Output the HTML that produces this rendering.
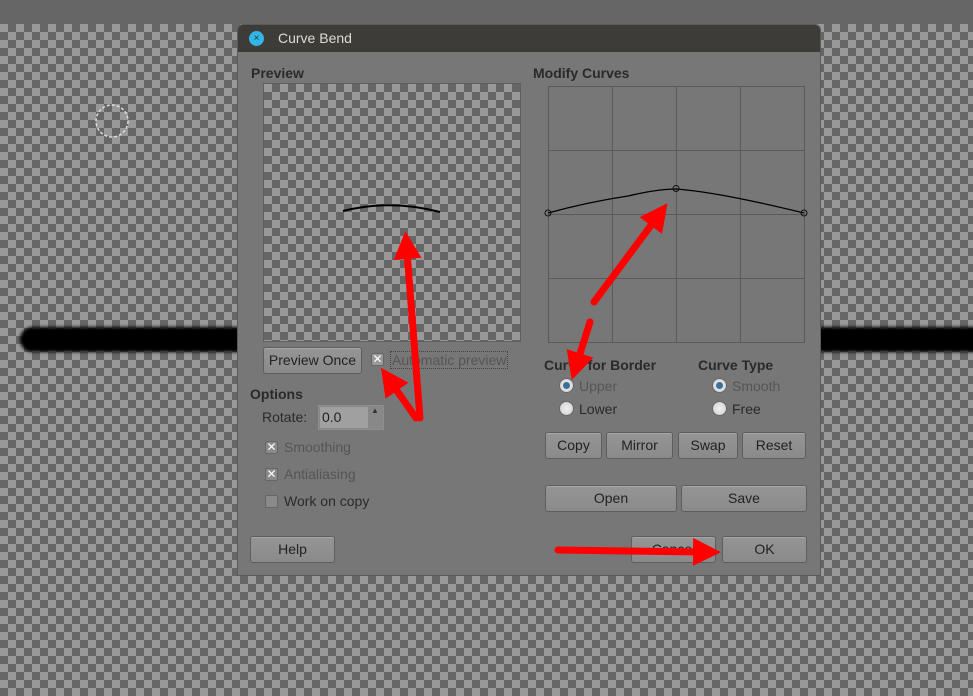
<!DOCTYPE html>
<html><head><style>
*{margin:0;padding:0;box-sizing:border-box}
body{width:973px;height:696px;overflow:hidden;position:relative;font-family:"Liberation Sans","DejaVu Sans",sans-serif;
background-color:#999;
background-image:linear-gradient(45deg,#666 25%,transparent 25%,transparent 75%,#666 75%),linear-gradient(45deg,#666 25%,transparent 25%,transparent 75%,#666 75%);
background-size:16px 16px;background-position:0 24px,8px 32px}
.top{position:absolute;left:0;top:0;width:973px;height:24px;background:#666}
.stroke{position:absolute;top:327px;height:25px;background:#000;border-radius:13px;filter:blur(1.5px)}
.dlg{position:absolute;left:238px;top:25px;width:582px;height:550px;background:#777;box-shadow:0 0 0 1px #5a5a5a;border-radius:5px 5px 0 0}
.title{position:absolute;left:0;top:0;width:100%;height:27px;background:#3d3c38;border-radius:5px 5px 0 0;color:#dfdbd2;font-size:14px;line-height:27px;padding-left:40px}
.close{position:absolute;left:11px;top:6px;width:15px;height:15px;border-radius:50%;background:#33b5e5;color:#1a3a50;font-size:10px;line-height:15px;text-align:center}
.a{position:absolute;font-size:14px;color:#2a2a2a}
.b{font-weight:bold;color:#2a2a2a}
.prev{position:absolute;left:25px;top:58px;width:258px;height:259px;border:1px solid #5f5f5f;
background-color:#999;background-image:linear-gradient(45deg,#666 25%,transparent 25%,transparent 75%,#666 75%),linear-gradient(45deg,#666 25%,transparent 25%,transparent 75%,#666 75%);background-size:16px 16px;background-position:0 0,8px 8px}
.btn{position:absolute;height:27px;border:1px solid #5e5e5e;border-radius:3px;background:linear-gradient(#959595,#8a8a8a);font-size:14px;color:#222;text-align:center;line-height:25px;box-shadow:inset 0 1px 0 #a8a8a8}
.cb{position:absolute;width:13px;height:13px;border:1px solid #666;border-radius:2px;background:#8a8a8a;color:#fff;font-size:12px;line-height:11px;text-align:center;font-weight:bold}
.rad{position:absolute;width:15px;height:15px;border-radius:50%;background:radial-gradient(#f2f2f2,#ccc);border:1px solid #666}
.rad.on::after{content:"";position:absolute;left:3px;top:3px;width:7px;height:7px;border-radius:50%;background:#3b6f9c}
.dim{color:#555}
</style></head><body>
<div class="top"></div>
<div class="stroke" style="left:20px;width:240px"></div>
<div class="stroke" style="left:800px;width:190px"></div>
<svg style="position:absolute;left:90px;top:102px" width="40" height="36"><circle cx="22" cy="19" r="16" fill="none" stroke="#ddd" stroke-width="1.5" stroke-dasharray="3 2"/></svg>
<div class="dlg">
 <div class="title"><div class="close">×</div>Curve Bend</div>
 <div class="a b" style="left:13px;top:40px">Preview</div>
 <div class="a b" style="left:295px;top:40px">Modify Curves</div>
 <div class="prev"></div>
 <svg style="position:absolute;left:0;top:0" width="582" height="550">
  <path d="M105 186 Q152 174 202 187" stroke="#000" stroke-width="2" fill="none"/>
  <g stroke="#5a5a5a" stroke-width="1" fill="none">
   <rect x="310.5" y="61.5" width="256" height="256"/>
   <path d="M374.5 61v256M438.5 61v256M502.5 61v256M310 125.5h256M310 189.5h256M310 253.5h256"/>
  </g>
  <path d="M310 188 Q350 177 390 171 Q420 164 438 164 Q480 167 566 188" stroke="#000" stroke-width="1.3" fill="none"/>
  <g stroke="#111" fill="none"><circle cx="310" cy="188" r="3"/><circle cx="438" cy="163.5" r="3"/><circle cx="566" cy="188" r="3"/></g>
 </svg>
 <div class="btn" style="left:25px;top:322px;width:99px">Preview Once</div>
 <div class="cb" style="left:133px;top:328px;background:#999">✕</div>
 <div class="a dim" style="left:152px;top:326px;border:1px dotted #444;padding:0 1px">Automatic preview</div>
 <div class="a b" style="left:12px;top:361px">Options</div>
 <div class="a" style="left:24px;top:384px">Rotate:</div>
 <div style="position:absolute;left:80px;top:380px;width:66px;height:25px;background:#888;border:1px solid #8e8e8e"></div>
 <div style="position:absolute;left:82px;top:382px;width:48px;height:21px;background:#a0a0a0;font-size:14px;line-height:21px;padding-left:2px;color:#222">0.0</div>
 <div style="position:absolute;left:133px;top:381px;font-size:8px;color:#333">▲</div>
 <div style="position:absolute;left:133px;top:393px;font-size:8px;color:#888">▼</div>
 <div class="cb" style="left:27px;top:416px">✕</div><div class="a dim" style="left:46px;top:414px">Smoothing</div>
 <div class="cb" style="left:27px;top:443px">✕</div><div class="a dim" style="left:46px;top:441px">Antialiasing</div>
 <div class="cb" style="left:27px;top:470px"></div><div class="a" style="left:46px;top:468px">Work on copy</div>
 <div class="btn" style="left:12px;top:511px;width:85px">Help</div>
 <div class="a b" style="left:306px;top:332px">Curve for Border</div>
 <div class="a b" style="left:460px;top:332px">Curve Type</div>
 <div class="rad on" style="left:321px;top:353px"></div><div class="a dim" style="left:341px;top:353px">Upper</div>
 <div class="rad" style="left:321px;top:376px"></div><div class="a" style="left:341px;top:376px">Lower</div>
 <div class="rad on" style="left:474px;top:353px"></div><div class="a dim" style="left:494px;top:353px">Smooth</div>
 <div class="rad" style="left:474px;top:376px"></div><div class="a" style="left:494px;top:376px">Free</div>
 <div class="btn" style="left:307px;top:407px;width:57px">Copy</div>
 <div class="btn" style="left:368px;top:407px;width:67px">Mirror</div>
 <div class="btn" style="left:440px;top:407px;width:60px">Swap</div>
 <div class="btn" style="left:504px;top:407px;width:64px">Reset</div>
 <div class="btn" style="left:307px;top:460px;width:132px">Open</div>
 <div class="btn" style="left:443px;top:460px;width:126px">Save</div>
 <div class="btn" style="left:393px;top:511px;width:85px">Cancel</div>
 <div class="btn" style="left:484px;top:511px;width:85px">OK</div>
</div>
<svg style="position:absolute;left:0;top:0" width="973" height="696">
 <defs><marker id="h" markerWidth="4" markerHeight="4" refX="1" refY="2" orient="auto" markerUnits="strokeWidth"><path d="M0 0L4 2L0 4z" fill="#f00"/></marker></defs>
 <g stroke="#f00" stroke-width="7" stroke-linecap="round" fill="none">
  <line x1="420" y1="418" x2="407" y2="252" marker-end="url(#h)"/>
  <line x1="416" y1="418" x2="393" y2="385" marker-end="url(#h)"/>
  <line x1="594" y1="302" x2="655" y2="220" marker-end="url(#h)"/>
  <line x1="590" y1="322" x2="578" y2="360" marker-end="url(#h)"/>
  <line x1="558" y1="550" x2="700" y2="552" marker-end="url(#h)"/>
 </g>
</svg>
</body></html>
